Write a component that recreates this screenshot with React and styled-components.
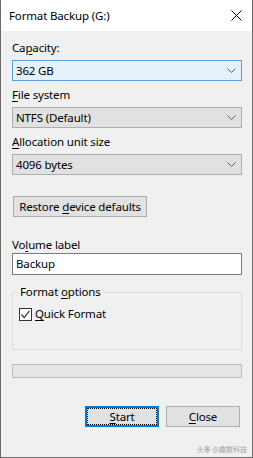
import React from "react";
import styled, { createGlobalStyle } from "styled-components";

const GlobalStyle = createGlobalStyle`
  html, body {
    margin: 0;
    padding: 0;
    background: #f0f0f0;
  }
`;

const Window = styled.div`
  width: 253px;
  height: 458px;
  box-sizing: border-box;
  border: 1px solid #6b6b6b;
  border-top: none;
  background: #f0f0f0;
  display: flex;
  flex-direction: column;
  font-family: "Noto Sans", "Liberation Sans", sans-serif;
  font-size: 11.5px;
  letter-spacing: -0.15px;
  color: #000;
  overflow: hidden;
`;

const TitleBar = styled.div`
  height: 31px;
  flex: none;
  background: #fff;
  display: flex;
  align-items: center;
  justify-content: space-between;
  padding: 0 10px 0 8px;
`;

const Title = styled.span`
  line-height: 16px;
`;

const Body = styled.div`
  flex: 1;
  display: flex;
  flex-direction: column;
  padding: 9px 10px 0 11px;
`;

const Label = styled.div`
  line-height: 16px;
  height: 16px;
  margin-top: ${(p) => p.$top || 0}px;
  margin-bottom: ${(p) => (p.$gap === undefined ? 4 : p.$gap)}px;
  white-space: nowrap;
`;

const Key = styled.span`
  text-decoration: underline;
  text-underline-offset: 2px;
`;

const Combo = styled.div`
  height: 21px;
  box-sizing: border-box;
  border: 1px solid ${(p) => (p.$active ? "#569de5" : "#adadad")};
  background: ${(p) => (p.$active ? "#e5f1fb" : "#e1e1e1")};
  display: flex;
  align-items: center;
  justify-content: space-between;
  padding: 0 5px 0 3px;
  margin-bottom: 6px;
  line-height: 16px;
`;

const Button = styled.div`
  position: relative;
  width: ${(p) => p.$w}px;
  height: 21px;
  box-sizing: border-box;
  border: ${(p) => (p.$default ? "2px solid #0078d7" : "1px solid #adadad")};
  background: #e1e1e1;
  display: flex;
  align-items: center;
  justify-content: center;
  line-height: 16px;
  white-space: nowrap;

  ${(p) =>
    p.$default &&
    `
    &::after {
      content: "";
      position: absolute;
      inset: 0;
      border: 1px dotted #000;
    }
  `}
`;

const RestoreRow = styled.div`
  margin-top: 15px;
  margin-left: 1px;
`;

const TextBox = styled.div`
  height: 22px;
  box-sizing: border-box;
  border: 1px solid #7a7a7a;
  background: #fff;
  display: flex;
  align-items: center;
  padding-left: 3px;
  line-height: 16px;
`;

const Group = styled.fieldset`
  margin: 9px 0 0 0;
  padding: 0 0 27px 5px;
  border: 1px solid #dcdcdc;
  min-width: 0;
`;

const Legend = styled.legend`
  padding: 0 2px;
  line-height: 16px;
`;

const CheckRow = styled.div`
  margin-top: 6px;
  display: flex;
  align-items: center;
  gap: 3px;
  line-height: 16px;
`;

const CheckBox = styled.div`
  width: 13px;
  height: 13px;
  box-sizing: border-box;
  border: 1px solid #333;
  background: #fff;
  margin-left: 1px;
  display: flex;
  align-items: center;
  justify-content: center;
`;

const Progress = styled.div`
  margin-top: 14px;
  height: 14px;
  box-sizing: border-box;
  border: 1px solid #bcbcbc;
  background: #e6e6e6;
`;

const ButtonRow = styled.div`
  margin-top: 28px;
  margin-right: 2px;
  display: flex;
  justify-content: flex-end;
  gap: 7px;
`;

const Watermark = styled.div`
  margin-top: auto;
  margin-bottom: 3px;
  margin-right: -5px;
  align-self: flex-end;
  font-family: "Noto Sans CJK SC", sans-serif;
  font-size: 7px;
  letter-spacing: 0;
  line-height: 9px;
  color: #9a9a9a;
  text-shadow: 0 0 1px #fff;
`;

const Chevron = () => (
  <svg width="9" height="5" viewBox="0 0 9 5">
    <path d="M0.5 0.5 L4.5 4.5 L8.5 0.5" fill="none" stroke="#606060" strokeWidth="1" />
  </svg>
);

const CloseIcon = () => (
  <svg width="11" height="11" viewBox="0 0 11 11">
    <path d="M0.5 0.5 L10.5 10.5 M10.5 0.5 L0.5 10.5" stroke="#000" strokeWidth="1" />
  </svg>
);

const Check = () => (
  <svg width="11" height="11" viewBox="0 0 11 11">
    <path d="M1.5 5.5 L4.2 8.5 L9.5 1.8" fill="none" stroke="#333" strokeWidth="1.2" />
  </svg>
);

export default function App() {
  return (
    <>
      <GlobalStyle />
      <Window>
        <TitleBar>
          <Title>Format Backup (G:)</Title>
          <CloseIcon />
        </TitleBar>

        <Body>
          <Label>
            Ca<Key>p</Key>acity:
          </Label>
          <Combo $active>
            <span>362 GB</span>
            <Chevron />
          </Combo>

          <Label>
            <Key>F</Key>ile system
          </Label>
          <Combo>
            <span>NTFS (Default)</span>
            <Chevron />
          </Combo>

          <Label>
            <Key>A</Key>llocation unit size
          </Label>
          <Combo>
            <span>4096 bytes</span>
            <Chevron />
          </Combo>

          <RestoreRow>
            <Button $w={134}>
              <span>
                Restore <Key>d</Key>evice defaults
              </span>
            </Button>
          </RestoreRow>

          <Label $top={20} $gap={0}>
            Vo<Key>l</Key>ume label
          </Label>
          <TextBox>Backup</TextBox>

          <Group>
            <Legend>
              Format <Key>o</Key>ptions
            </Legend>
            <CheckRow>
              <CheckBox>
                <Check />
              </CheckBox>
              <span>
                <Key>Q</Key>uick Format
              </span>
            </CheckRow>
          </Group>

          <Progress />

          <ButtonRow>
            <Button $w={74} $default>
              <span>
                <Key>S</Key>tart
              </span>
            </Button>
            <Button $w={74}>
              <span>
                <Key>C</Key>lose
              </span>
            </Button>
          </ButtonRow>

          <Watermark>头条 @趣数科技</Watermark>
        </Body>
      </Window>
    </>
  );
}
